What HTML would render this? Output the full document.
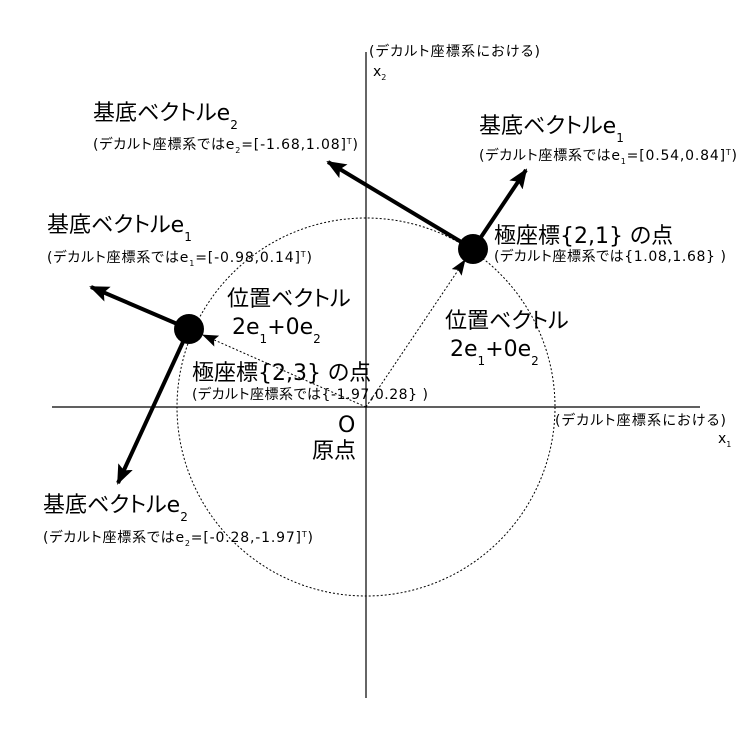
<!DOCTYPE html>
<html><head><meta charset="utf-8"><style>
html,body{margin:0;padding:0;background:#fff;}
svg{display:block;}
text{font-family:"DejaVu Sans","Noto Sans CJK JP",sans-serif;fill:#000;font-feature-settings:"palt";}
.b{font-size:22px;}
.s{font-size:14px;}
.sub{font-size:12px;}
.subs{font-size:8px;}
</style></head><body>
<svg width="756" height="756" viewBox="0 0 756 756" xmlns="http://www.w3.org/2000/svg">
<defs>
<marker id="ah" viewBox="0 0 20 16" refX="18" refY="8" markerWidth="20" markerHeight="16" markerUnits="userSpaceOnUse" orient="auto">
<path d="M0,0 L20,8 L0,16 L4,8 Z" fill="#000"/>
</marker>
<marker id="ahs" viewBox="0 0 16 12" refX="15" refY="6" markerWidth="16" markerHeight="12" markerUnits="userSpaceOnUse" orient="auto">
<path d="M0,0 L16,6 L0,12 L3,6 Z" fill="#000"/>
</marker>
</defs>
<line x1="366" y1="52" x2="366" y2="698" stroke="#000" stroke-width="1.2"/>
<line x1="52" y1="407" x2="700" y2="407" stroke="#000" stroke-width="1.2"/>
<circle cx="366" cy="407" r="189" fill="none" stroke="#000" stroke-width="1" stroke-dasharray="2,2"/>
<line x1="366" y1="407" x2="465" y2="260" stroke="#000" stroke-width="1" stroke-dasharray="2,2" marker-end="url(#ahs)"/>
<line x1="366" y1="407" x2="203" y2="335" stroke="#000" stroke-width="1" stroke-dasharray="2,2" marker-end="url(#ahs)"/>
<line x1="473" y1="249" x2="526" y2="170" stroke="#000" stroke-width="4" marker-end="url(#ah)"/>
<line x1="473" y1="249" x2="328" y2="162" stroke="#000" stroke-width="4" marker-end="url(#ah)"/>
<line x1="189" y1="329" x2="91" y2="287" stroke="#000" stroke-width="4" marker-end="url(#ah)"/>
<line x1="189" y1="329" x2="118" y2="483" stroke="#000" stroke-width="4" marker-end="url(#ah)"/>
<circle cx="473" cy="249" r="15" fill="#000"/>
<circle cx="189" cy="329" r="15" fill="#000"/>

<text class="s" x="369" y="56" textLength="171" lengthAdjust="spacing">(デカルト座標系における)</text>
<text class="s" x="373" y="76">x<tspan class="subs" dy="4">2</tspan></text>
<text class="s" x="555" y="425" textLength="171" lengthAdjust="spacing">(デカルト座標系における)</text>
<text class="s" x="718" y="443">x<tspan class="subs" dy="4">1</tspan></text>

<text class="b" x="93" y="120">基底ベクトルe<tspan class="sub" dy="9">2</tspan></text>
<text class="s" x="93" y="149" textLength="265" lengthAdjust="spacing">(デカルト座標系ではe<tspan class="subs" dy="4">2</tspan><tspan dy="-4">=[-1.68,1.08]</tspan><tspan class="subs" dy="-5">T</tspan><tspan dy="5">)</tspan></text>

<text class="b" x="479" y="133">基底ベクトルe<tspan class="sub" dy="9">1</tspan></text>
<text class="s" x="479" y="160" textLength="258" lengthAdjust="spacing">(デカルト座標系ではe<tspan class="subs" dy="4">1</tspan><tspan dy="-4">=[0.54,0.84]</tspan><tspan class="subs" dy="-5">T</tspan><tspan dy="5">)</tspan></text>

<text class="b" x="47" y="232">基底ベクトルe<tspan class="sub" dy="9">1</tspan></text>
<text class="s" x="47" y="262" textLength="265" lengthAdjust="spacing">(デカルト座標系ではe<tspan class="subs" dy="4">1</tspan><tspan dy="-4">=[-0.98,0.14]</tspan><tspan class="subs" dy="-5">T</tspan><tspan dy="5">)</tspan></text>

<text class="b" x="494" y="243">極座標{2,1} の点</text>
<text class="s" x="494" y="261" textLength="232" lengthAdjust="spacing">(デカルト座標系では{1.08,1.68} )</text>

<text class="b" x="227" y="306">位置ベクトル</text>
<text class="b" x="232" y="334">2e<tspan class="sub" dy="9">1</tspan><tspan dy="-9">+0e</tspan><tspan class="sub" dy="9">2</tspan></text>

<text class="b" x="445" y="328">位置ベクトル</text>
<text class="b" x="450" y="356">2e<tspan class="sub" dy="9">1</tspan><tspan dy="-9">+0e</tspan><tspan class="sub" dy="9">2</tspan></text>

<text class="b" x="192" y="380">極座標{2,3} の点</text>
<text class="s" x="192" y="399" textLength="236" lengthAdjust="spacing">(デカルト座標系では{-1.97,0.28} )</text>

<text class="b" x="338" y="432">O</text>
<text class="b" x="312" y="458">原点</text>

<text class="b" x="43" y="512">基底ベクトルe<tspan class="sub" dy="9">2</tspan></text>
<text class="s" x="43" y="542" textLength="270" lengthAdjust="spacing">(デカルト座標系ではe<tspan class="subs" dy="4">2</tspan><tspan dy="-4">=[-0.28,-1.97]</tspan><tspan class="subs" dy="-5">T</tspan><tspan dy="5">)</tspan></text>
</svg>
</body></html>
